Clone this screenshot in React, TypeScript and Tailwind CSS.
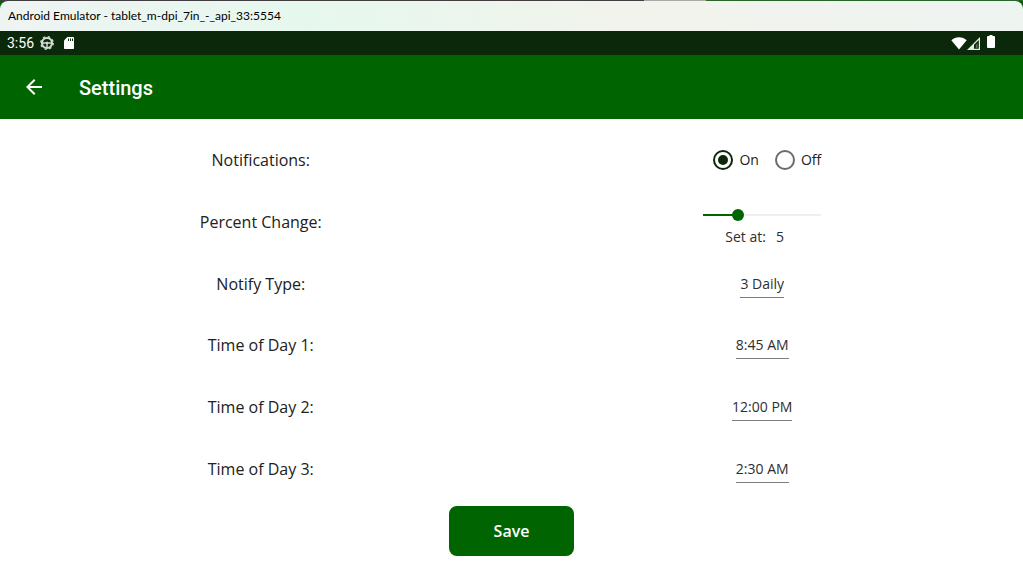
import { useState } from "react";

const times = [
  { id: "time-1", label: "Time of Day 1:", value: "8:45 AM" },
  { id: "time-2", label: "Time of Day 2:", value: "12:00 PM" },
  { id: "time-3", label: "Time of Day 3:", value: "2:30 AM" },
];

const rowClass = "grid grid-cols-2 items-center justify-items-center";
const fieldClass =
  "field-sizing-content appearance-none rounded-none border-0 border-b border-[#7c7c7c] bg-transparent pt-1 pb-[3px] text-sm leading-5 text-[#2e2e2e] outline-none";

function TitleBar() {
  return (
    <div className="bg-[#066106]">
      <div className="flex h-px">
        <div className="w-[63%] bg-[#423d40]" />
        <div className="w-[6%] bg-[#a9a9a9]" />
        <div className="flex-1 bg-[#2a672a]" />
      </div>
      <div className="flex h-[30px] items-center rounded-t-lg bg-[linear-gradient(to_right,#eef4f2_0%,#e6f8ee_30%,#f2f3ec_62%,#eef4f0_100%)] px-2 font-[Lato,sans-serif] text-xs text-black">
        <span className="whitespace-nowrap">Android Emulator - tablet_m-dpi_7in_-_api_33:5554</span>
      </div>
    </div>
  );
}

function StatusBar() {
  return (
    <div className="flex h-6 items-center justify-between bg-[#0b280b] pr-7 pl-[7px] font-[Roboto,sans-serif] text-white">
      <div className="flex items-center">
        <span className="text-sm leading-6">3:56</span>
        <svg className="ml-1.5" width="14" height="14" viewBox="0 0 14 14" fill="none" stroke="#d3dad3">
          <circle cx="7" cy="7" r="5" strokeWidth="2.2" />
          <circle cx="7" cy="7" r="6.3" strokeWidth="1.3" strokeDasharray="2.4 2.55" />
          <path d="M2 7H12M7 7V12" strokeWidth="1.4" />
          <circle cx="7" cy="7" r="1" fill="#d3dad3" />
        </svg>
        <svg className="ml-2.5" width="10" height="12" viewBox="0 0 10 12">
          <path d="M3.4 0H9.2Q10 0 10 .8V11.2Q10 12 9.2 12H.8Q0 12 0 11.2V3.4Z" fill="#fff" />
          <path d="M4.5 1.5V4M6.5 1.5V4M8.5 1.5V4" stroke="#0b280b" />
        </svg>
      </div>
      <div className="flex items-center">
        <svg width="16" height="13" viewBox="0 0 16 13">
          <path d="M8 12.500L.3 3.300C2.500 1.400 5 .3 8 .3S13.500 1.400 15.700 3.300Z" fill="#fff" />
        </svg>
        <svg width="13" height="13" viewBox="0 0 13 13">
          <path d="M0 13L13 0V13Z" fill="#e4e9e4" />
          <path d="M7 11.800V7.800L11.800 3V11.800Z" fill="#0b280b" />
          <path d="M8.800 11V8L10.600 6.200V11Z" fill="#5d705d" />
        </svg>
        <svg width="8" height="13" viewBox="0 0 8 13" className="mb-1 ml-[7px]">
          <path d="M2.500 0H5.500V1H7Q8 1 8 2V12Q8 13 7 13H1Q0 13 0 12V2Q0 1 1 1H2.500Z" fill="#fff" />
        </svg>
      </div>
    </div>
  );
}

function AppBar() {
  return (
    <header className="flex h-16 items-center bg-[#006400] text-white">
      <button type="button" aria-label="Back" className="ml-[22px] flex size-6 items-center justify-center">
        <svg width="24" height="24" viewBox="0 0 24 24" fill="#fff">
          <path d="M20 11H7.830l5.590-5.590L12 4l-8 8 8 8 1.410-1.410L7.830 13H20v-2z" />
        </svg>
      </button>
      <h1 className="ml-[33px] pt-0.5 font-[Roboto,sans-serif] text-xl leading-6 font-medium">Settings</h1>
    </header>
  );
}

export default function App() {
  const [on, setOn] = useState(true);
  const [percent, setPercent] = useState(5);
  const min = 1;
  const max = 16;
  const filled = ((percent - min) / (max - min)) * 100;
  const radioClass =
    "size-5 appearance-none rounded-full border-2 border-[#6b6b6b] p-[3px] before:block before:size-full before:rounded-full checked:border-[#0b280b] checked:before:bg-[#0b280b]";

  return (
    <div className="flex min-h-screen flex-col bg-white font-['Open_Sans',sans-serif] text-[#212121]">
      <TitleBar />
      <StatusBar />
      <AppBar />
      <form className="flex flex-1 flex-col px-2.5 pt-2.5 pb-[13px]" onSubmit={(e) => e.preventDefault()}>
        <div className="grid flex-1 auto-rows-fr pb-1.5">
          <div className={rowClass} role="radiogroup" aria-labelledby="notifications">
            <span id="notifications">Notifications:</span>
            <div className="flex w-[118px] justify-end gap-4 text-sm leading-5">
              <label className="flex items-center gap-1.5">
                <input type="radio" name="notify" className={radioClass} checked={on} onChange={() => setOn(true)} />
                On
              </label>
              <label className="flex items-center gap-1.5">
                <input type="radio" name="notify" className={radioClass} checked={!on} onChange={() => setOn(false)} />
                Off
              </label>
            </div>
          </div>

          <div className={rowClass}>
            <label htmlFor="percent">Percent Change:</label>
            <div className="flex w-[118px] flex-col gap-1.5 pt-3">
              <input
                id="percent"
                type="range"
                min={min}
                max={max}
                value={percent}
                onChange={(e) => setPercent(Number(e.target.value))}
                style={{
                  backgroundImage: `linear-gradient(to right, #006400 ${filled}%, #efefef ${filled}%)`,
                }}
                className="h-3 w-full appearance-none bg-size-[100%_2px] bg-center bg-no-repeat [&::-webkit-slider-thumb]:size-3 [&::-webkit-slider-thumb]:appearance-none [&::-webkit-slider-thumb]:rounded-full [&::-webkit-slider-thumb]:bg-[#006400]"
              />
              <output htmlFor="percent" className="flex gap-2.5 pl-[22px] text-sm leading-5 text-[#2e2e2e]">
                <span>Set at:</span>
                <span>{percent}</span>
              </output>
            </div>
          </div>

          <div className={rowClass}>
            <label htmlFor="notify-type">Notify Type:</label>
            <select id="notify-type" className={fieldClass} defaultValue="3 Daily">
              <option>3 Daily</option>
            </select>
          </div>

          {times.map((time) => (
            <div key={time.id} className={rowClass}>
              <label htmlFor={time.id}>{time.label}</label>
              <input id={time.id} type="text" className={fieldClass} defaultValue={time.value} />
            </div>
          ))}
        </div>
        <button
          type="submit"
          className="h-[50px] w-[125px] self-center rounded-lg bg-[#006400] text-base font-semibold text-white"
        >
          Save
        </button>
      </form>
    </div>
  );
}
